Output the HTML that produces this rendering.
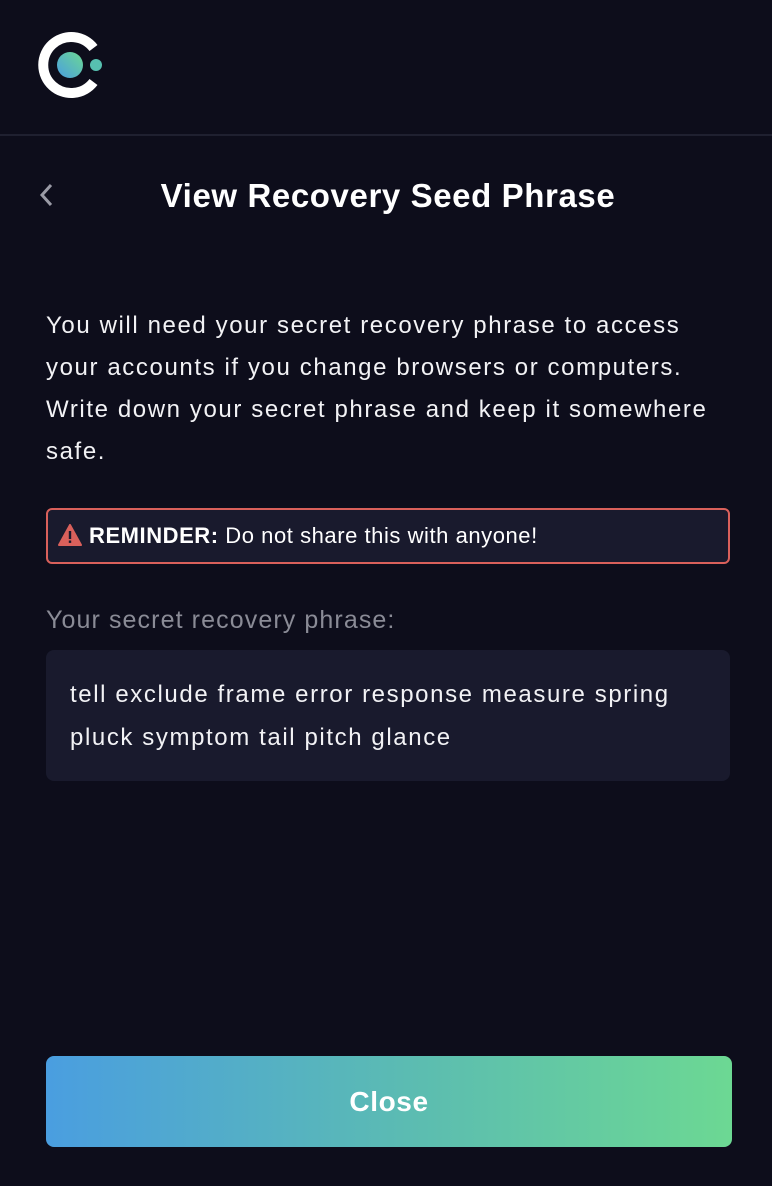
<!DOCTYPE html>
<html><head><style>
body{margin:0;width:772px;height:1186px;background:#0d0d1b;font-family:"Liberation Sans",sans-serif;color:#fff;position:relative;overflow:hidden}
.hdr{position:absolute;left:0;top:0;width:772px;height:134px;border-bottom:2px solid #1f2030}
.title{position:absolute;top:177px;left:0;width:776px;text-align:center;font-weight:bold;font-size:33px;letter-spacing:0.6px}
.p{position:absolute;left:46px;top:305px;width:720px;font-size:24px;line-height:42px;color:#f2f2f5;letter-spacing:1.6px;white-space:nowrap}
.rem{position:absolute;left:46px;top:508px;width:680px;height:52px;border:2px solid #d9605b;border-radius:6px;background:#191a2d;box-sizing:content-box}
.rem span{position:absolute;left:41px;top:13px;font-size:22px;letter-spacing:0.55px;white-space:nowrap}
.lab{position:absolute;left:46px;top:606px;font-size:25px;color:#8a8b96;letter-spacing:1.1px}
.box{position:absolute;left:46px;top:650px;width:684px;height:131px;background:#191a2d;border-radius:8px}
.box div{position:absolute;left:24px;top:23px;width:650px;font-size:24px;line-height:43px;color:#f2f2f5;letter-spacing:1.6px;white-space:nowrap}
.btn{position:absolute;left:46px;top:1056px;width:686px;height:91px;border-radius:8px;background:linear-gradient(90deg,#4a9ee0,#5cbdb0 55%,#6cd893);text-align:center;line-height:91px;font-size:28px;font-weight:bold;letter-spacing:0.6px}
</style></head><body>
<div class="hdr">
<svg width="120" height="120" style="position:absolute;left:0;top:0">
<defs><linearGradient id="g" x1="0" y1="1" x2="1" y2="0"><stop offset="0" stop-color="#4a9ee0"/><stop offset="1" stop-color="#6cd893"/></linearGradient></defs>
<path d="M93.5 48 A28 28 0 1 0 93.5 82" fill="none" stroke="#fff" stroke-width="10"/>
<circle cx="70" cy="65" r="13" fill="url(#g)"/>
<circle cx="96" cy="65" r="6" fill="#57c0b0"/>
</svg>
</div>
<svg width="20" height="30" style="position:absolute;left:36px;top:181px"><path d="M15 4 L6 14 L15 24" fill="none" stroke="#9a9ba6" stroke-width="3"/></svg>
<div class="title">View Recovery Seed Phrase</div>
<div class="p">You will need your secret recovery phrase to access<br>your accounts if you change browsers or computers.<br>Write down your secret phrase and keep it somewhere<br>safe.</div>
<div class="rem">
<svg width="24" height="22" style="position:absolute;left:10px;top:14px"><path d="M12 1 L23 21 L1 21 Z" fill="#d9605b" stroke="#d9605b" stroke-linejoin="round" stroke-width="2"/><rect x="10.8" y="7" width="2.4" height="8" fill="#191a2d"/><rect x="10.8" y="16.5" width="2.4" height="2.4" fill="#191a2d"/></svg>
<span><b>REMINDER:</b> Do not share this with anyone!</span></div>
<div class="lab">Your secret recovery phrase:</div>
<div class="box"><div>tell exclude frame error response measure spring<br>pluck symptom tail pitch glance</div></div>
<div class="btn">Close</div>
</body></html>
